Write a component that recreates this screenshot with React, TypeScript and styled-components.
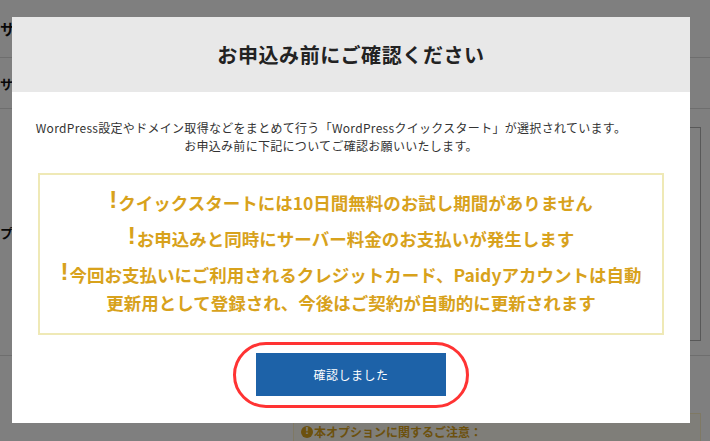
import React from "react";
import styled, { createGlobalStyle } from "styled-components";

const GlobalStyle = createGlobalStyle`
  html, body { margin: 0; padding: 0; background: #ffffff; }
  body {
    font-family: "Noto Sans CJK JP", "Noto Sans", sans-serif;
    color: #222;
    overflow: hidden;
  }
  * { box-sizing: border-box; }
`;

/* ---------- background page ---------- */

const Page = styled.div`
  width: 710px;
  height: 441px;
  background: #ffffff;
`;

const Row = styled.div<{ $height: number }>`
  display: grid;
  grid-template-columns: 293px 1fr;
  height: ${(p) => p.$height}px;
  border-bottom: 1px solid #dcdcdc;
`;

const LastRow = styled.div`
  display: grid;
  grid-template-columns: 293px 1fr;
`;

const Label = styled.div<{ $size: number }>`
  display: flex;
  align-items: center;
  font-size: ${(p) => p.$size}px;
  font-weight: 700;
  color: #111;
`;

const Cell = styled.div<{ $pad: string }>`
  display: flex;
  flex-direction: column;
  padding: ${(p) => p.$pad};
`;

const FieldBox = styled.div`
  flex: 1;
  border: 1px solid #b0b0b0;
  background: #ffffff;
`;

const NoticeBox = styled.div`
  border: 1px solid #fff3c8;
  border-bottom: none;
  background: #fffdf3;
  padding: 9px 7px 10px;
  display: flex;
  align-items: center;
  gap: 1px;
  color: #d9a21a;
  font-size: 12px;
  font-weight: 700;
`;

const NoticeIcon = styled.span`
  display: inline-flex;
  align-items: center;
  justify-content: center;
  width: 12px;
  height: 12px;
  border-radius: 50%;
  background: #d9a21a;
  color: #fffdf3;
  font-size: 9px;
  font-weight: 900;
  line-height: 1;
  font-family: "DejaVu Sans", sans-serif;
`;

/* ---------- modal ---------- */

const Overlay = styled.div`
  position: fixed;
  inset: 0;
  background: rgba(0, 0, 0, 0.5);
  display: flex;
  align-items: flex-start;
  padding: 17px 0 0 12px;
`;

const Modal = styled.div`
  flex: none;
  width: 678px;
  background: #ffffff;
  display: flex;
  flex-direction: column;
`;

const Header = styled.div`
  height: 75px;
  background: #e8e8e8;
  display: flex;
  align-items: center;
  justify-content: center;
`;

const Title = styled.h2`
  margin: 0;
  font-size: 20px;
  font-weight: 700;
  color: #222;
  letter-spacing: 0.6px;
`;

const Body = styled.div`
  padding: 27px 26px 27px;
  display: flex;
  flex-direction: column;
  align-items: center;
`;

const Lead = styled.p`
  margin: 0 40px 0 0;
  font-size: 12px;
  line-height: 18px;
  letter-spacing: 0.3px;
  color: #333;
  text-align: center;
  white-space: nowrap;
`;

const WarnBox = styled.div`
  align-self: stretch;
  margin-top: 18px;
  border: 2px solid #efe9b6;
  padding: 13px 10px 16px;
  display: flex;
  flex-direction: column;
  gap: 7px;
`;

const WarnLine = styled.p`
  margin: 0;
  font-size: 17.5px;
  line-height: 28px;
  font-weight: 700;
  color: #d8a21c;
  text-align: center;
`;

const Bang = styled.span`
  font-family: "Liberation Sans", sans-serif;
  font-size: 24px;
  font-weight: 900;
  margin-right: 1px;
  position: relative;
  top: -2px;
`;

const ButtonWrap = styled.div`
  position: relative;
  margin-top: 18px;
`;

const ConfirmButton = styled.button`
  width: 190px;
  height: 43px;
  border: none;
  background: #1d62a8;
  color: #ffffff;
  font-family: inherit;
  font-size: 12px;
  letter-spacing: 0.5px;
  cursor: pointer;
`;

const Ring = styled.div`
  position: absolute;
  left: -23px;
  top: -11px;
  width: 236px;
  height: 66px;
  border: 3px solid #ff3333;
  border-radius: 33px;
  pointer-events: none;
`;

export default function App() {
  return (
    <>
      <GlobalStyle />
      <Page>
        <Row $height={58}>
          <Label $size={15}>サ</Label>
          <Cell $pad="0" />
        </Row>
        <Row $height={51}>
          <Label $size={13}>サ</Label>
          <Cell $pad="0" />
        </Row>
        <Row $height={247}>
          <Label $size={13}>プ</Label>
          <Cell $pad="18px 9px 14px 0">
            <FieldBox />
          </Cell>
        </Row>
        <LastRow>
          <div />
          <Cell $pad="57px 9px 0 0">
            <NoticeBox>
              <NoticeIcon>!</NoticeIcon>
              本オプションに関するご注意：
            </NoticeBox>
          </Cell>
        </LastRow>
      </Page>

      <Overlay>
        <Modal role="dialog" aria-modal="true">
          <Header>
            <Title>お申込み前にご確認ください</Title>
          </Header>
          <Body>
            <Lead>
              WordPress設定やドメイン取得などをまとめて行う「WordPressクイックスタート」が選択されています。
              <br />
              お申込み前に下記についてご確認お願いいたします。
            </Lead>
            <WarnBox>
              <WarnLine>
                <Bang>!</Bang>クイックスタートには10日間無料のお試し期間がありません
              </WarnLine>
              <WarnLine>
                <Bang>!</Bang>お申込みと同時にサーバー料金のお支払いが発生します
              </WarnLine>
              <WarnLine>
                <Bang>!</Bang>今回お支払いにご利用されるクレジットカード、Paidyアカウントは自動
                <br />
                更新用として登録され、今後はご契約が自動的に更新されます
              </WarnLine>
            </WarnBox>
            <ButtonWrap>
              <ConfirmButton>確認しました</ConfirmButton>
              <Ring />
            </ButtonWrap>
          </Body>
        </Modal>
      </Overlay>
    </>
  );
}
